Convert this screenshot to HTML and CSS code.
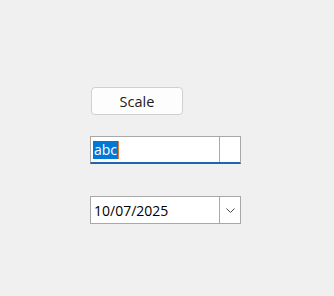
FILE: index.html
```html
<!DOCTYPE html>
<html lang="en">
<head>
  <meta charset="UTF-8" />
  <title>Scale</title>
  <link rel="stylesheet" href="styles.css">
</head>
<body>
  <div class="panel">
    <button class="btn">Scale</button>

    <div class="field text-field">
      <div class="field-main"><span class="sel">abc</span><span class="caret"></span></div>
      <div class="field-side"></div>
    </div>

    <div class="field date-field">
      <div class="field-main">10/07/2025</div>
      <div class="field-side">
        <svg width="9" height="5" viewBox="0 0 9 5"><path d="M0.5 0.5 L4.5 4.5 L8.5 0.5" fill="none" stroke="#444" stroke-width="1"/></svg>
      </div>
    </div>
  </div>
</body>
</html>
```

FILE: styles.css
```css
body {
  margin: 0;
  background: #f0f0f0;
  font-family: "Open Sans", "Noto Sans", sans-serif;
  font-size: 14px;
  color: #000;
}

.panel {
  display: flex;
  flex-direction: column;
  align-items: flex-start;
  padding: 87px 0 0 90px;
}

.btn {
  width: 92px;
  height: 28px;
  margin-left: 1px;
  background: #fdfdfd;
  border: 1px solid #d0d0d0;
  border-radius: 4px;
  font-family: inherit;
  font-size: 14.5px;
  color: #1a1a1a;
  padding: 0;
}

.field {
  display: flex;
  width: 151px;
  height: 28px;
  box-sizing: border-box;
  border: 1px solid #a8a8a8;
  background: #fff;
}

.text-field {
  margin-top: 21px;
  border-bottom: 2px solid #1f65ad;
}

.date-field {
  margin-top: 32px;
}

.field-main {
  flex: 1;
  display: flex;
  align-items: center;
  padding-left: 2px;
  border-right: 1px solid #a8a8a8;
}

.date-field .field-main {
  padding-left: 3px;
  font-size: 14px;
}

.field-side {
  width: 20px;
  display: flex;
  align-items: center;
  justify-content: center;
}

.sel {
  background: #0078d7;
  color: #fff;
  line-height: 18px;
  padding: 0 1px;
}

.caret {
  width: 1px;
  height: 18px;
  background: #e07a30;
}
```
